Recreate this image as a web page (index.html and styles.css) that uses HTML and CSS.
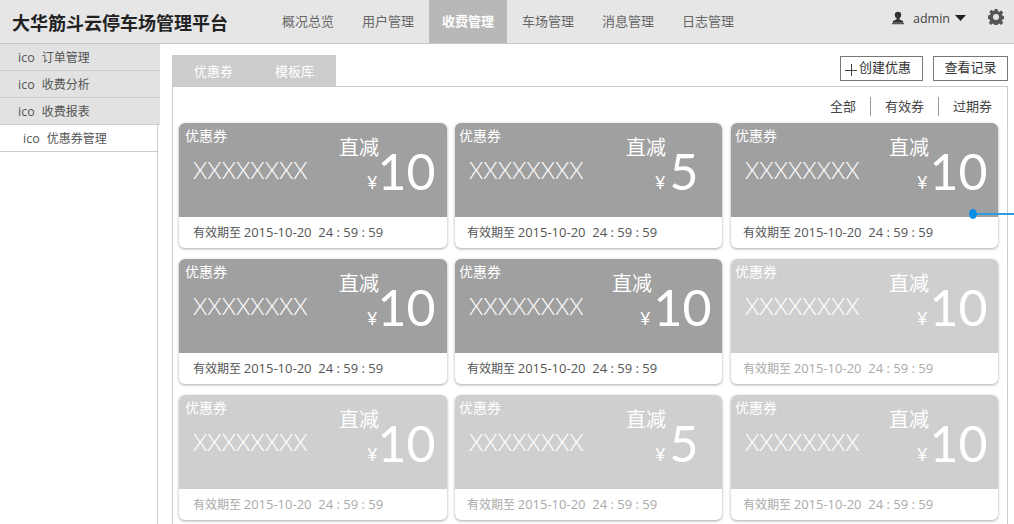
FILE: index.html
```html
<!DOCTYPE html>
<html lang="zh">
<head>
<meta charset="utf-8">
<title>大华筋斗云停车场管理平台</title>
<link rel="stylesheet" href="styles.css">
</head>
<body>
<header class="topbar">
  <h1 class="brand">大华筋斗云停车场管理平台</h1>
  <nav class="mainnav">
    <a class="mainnav-item">概况总览</a>
    <a class="mainnav-item">用户管理</a>
    <a class="mainnav-item is-active">收费管理</a>
    <a class="mainnav-item">车场管理</a>
    <a class="mainnav-item">消息管理</a>
    <a class="mainnav-item">日志管理</a>
  </nav>
  <div class="account">
    <svg class="icon-user" viewBox="0 0 14 14" width="14" height="14"><circle cx="7" cy="4" r="3.2" fill="#333"/><path d="M5.500 7h3v1.600l3.600 1.500v1.700H1.900v-1.700l3.600-1.500z" fill="#333"/><rect x="1" y="12.200" width="12" height="1" fill="#333"/></svg>
    <span class="account-name">admin</span>
    <svg class="icon-caret" viewBox="0 0 11 6" width="11" height="6"><path d="M0 0h11L5.500 6z" fill="#222"/></svg>
    <svg class="icon-gear" viewBox="0 0 16 16" width="16" height="16"><path fill="#555" fill-rule="evenodd" d="M6.500 0h3l.4 2.200 1.300.6 1.900-1.300 2.100 2.100-1.300 1.900.6 1.300 2.200.4v3l-2.200.4-.6 1.300 1.300 1.900-2.100 2.100-1.900-1.300-1.300.6-.4 2.200h-3l-.4-2.200-1.300-.6-1.900 1.300-2.100-2.100 1.300-1.900-.6-1.300L-.2 9.500v-3l2.200-.4.6-1.300-1.300-1.900 2.100-2.100 1.900 1.300 1.300-.6zM8 5a3 3 0 1 0 0 6 3 3 0 0 0 0-6z"/></svg>
  </div>
</header>
<div class="layout">
  <aside class="sidebar">
    <a class="side-item"><span class="ico">ico</span>订单管理</a>
    <a class="side-item"><span class="ico">ico</span>收费分析</a>
    <a class="side-item"><span class="ico">ico</span>收费报表</a>
    <a class="side-item is-active"><span class="ico">ico</span>优惠券管理</a>
  </aside>
  <main class="content">
    <div class="toolbar">
      <div class="tabs"><span class="tab">优惠券</span><span class="tab">模板库</span></div>
      <div class="actions">
        <button class="btn btn-create"><svg class="icon-plus" viewBox="0 0 12 12" width="12" height="12"><path d="M0 6.500h12M6.500 0v12" stroke="#444" fill="none"/></svg>创建优惠</button>
        <button class="btn btn-log">查看记录</button>
      </div>
    </div>
    <section class="panel">
      <div class="filters">
        <span class="filter">全部</span>
        <span class="filter">有效券</span>
        <span class="filter">过期券</span>
      </div>
      <div class="cards">
        <article class="card"><div class="card-head"><div class="card-left"><div class="card-label">优惠券</div><div class="card-name">XXXXXXXX</div></div><div class="card-right"><div class="card-type">直减</div><div class="card-value"><span class="yen">¥</span>10</div></div></div><div class="card-foot">有效期至 <span class="card-date">2015-10-20&nbsp; 24 : 59 : 59</span></div></article>
        <article class="card card-single"><div class="card-head"><div class="card-left"><div class="card-label">优惠券</div><div class="card-name">XXXXXXXX</div></div><div class="card-right"><div class="card-type">直减</div><div class="card-value"><span class="yen">¥</span>5</div></div></div><div class="card-foot">有效期至 <span class="card-date">2015-10-20&nbsp; 24 : 59 : 59</span></div></article>
        <article class="card"><div class="card-head"><div class="card-left"><div class="card-label">优惠券</div><div class="card-name">XXXXXXXX</div></div><div class="card-right"><div class="card-type">直减</div><div class="card-value"><span class="yen">¥</span>10</div></div></div><div class="card-foot">有效期至 <span class="card-date">2015-10-20&nbsp; 24 : 59 : 59</span></div></article>
        <article class="card"><div class="card-head"><div class="card-left"><div class="card-label">优惠券</div><div class="card-name">XXXXXXXX</div></div><div class="card-right"><div class="card-type">直减</div><div class="card-value"><span class="yen">¥</span>10</div></div></div><div class="card-foot">有效期至 <span class="card-date">2015-10-20&nbsp; 24 : 59 : 59</span></div></article>
        <article class="card card-wide"><div class="card-head"><div class="card-left"><div class="card-label">优惠券</div><div class="card-name">XXXXXXXX</div></div><div class="card-right"><div class="card-type">直减</div><div class="card-value"><span class="yen">¥</span>10</div></div></div><div class="card-foot">有效期至 <span class="card-date">2015-10-20&nbsp; 24 : 59 : 59</span></div></article>
        <article class="card is-expired"><div class="card-head"><div class="card-left"><div class="card-label">优惠券</div><div class="card-name">XXXXXXXX</div></div><div class="card-right"><div class="card-type">直减</div><div class="card-value"><span class="yen">¥</span>10</div></div></div><div class="card-foot">有效期至 <span class="card-date">2015-10-20&nbsp; 24 : 59 : 59</span></div></article>
        <article class="card is-expired"><div class="card-head"><div class="card-left"><div class="card-label">优惠券</div><div class="card-name">XXXXXXXX</div></div><div class="card-right"><div class="card-type">直减</div><div class="card-value"><span class="yen">¥</span>10</div></div></div><div class="card-foot">有效期至 <span class="card-date">2015-10-20&nbsp; 24 : 59 : 59</span></div></article>
        <article class="card card-single is-expired"><div class="card-head"><div class="card-left"><div class="card-label">优惠券</div><div class="card-name">XXXXXXXX</div></div><div class="card-right"><div class="card-type">直减</div><div class="card-value"><span class="yen">¥</span>5</div></div></div><div class="card-foot">有效期至 <span class="card-date">2015-10-20&nbsp; 24 : 59 : 59</span></div></article>
        <article class="card is-expired"><div class="card-head"><div class="card-left"><div class="card-label">优惠券</div><div class="card-name">XXXXXXXX</div></div><div class="card-right"><div class="card-type">直减</div><div class="card-value"><span class="yen">¥</span>10</div></div></div><div class="card-foot">有效期至 <span class="card-date">2015-10-20&nbsp; 24 : 59 : 59</span></div></article>
      </div>
    </section>
  </main>
</div>
<div class="marker"><span class="marker-dot"></span><span class="marker-line"></span></div>
</body>
</html>
```
FILE: styles.css
```css
* { box-sizing: border-box; }
html, body { margin: 0; height: 524px; overflow: hidden; }
body { background: #fff; color: #555; font-family: "Noto Sans CJK SC", "Liberation Sans", sans-serif; font-size: 12px; position: relative; }

.topbar { height: 44px; display: flex; align-items: stretch; background: #e6e6e6; border-bottom: 1px solid #c8c8c8; }
.brand { margin: 0 0 0 12px; width: 257px; font-size: 18px; line-height: 45px; font-weight: 700; color: #222; white-space: nowrap; }
.mainnav { display: flex; gap: 2px; }
.mainnav-item { width: 78px; text-align: center; font-size: 13px; line-height: 42px; color: #666; }
.mainnav-item.is-active { background: #b8b8b8; color: #fff; font-weight: 700; }
.account { margin-left: auto; display: flex; align-items: center; padding: 0 10px 7px 0; }
.icon-user { display: block; }
.account-name { margin-left: 8px; font-family: "Open Sans", sans-serif; font-size: 12.5px; color: #444; }
.icon-caret { margin-left: 5px; }
.icon-gear { margin: 0 0 3px 22px; }

.layout { display: flex; height: 480px; }
.sidebar { width: 158px; flex: none; border-right: 1px solid #ccc; }
.side-item { display: block; height: 27px; margin-right: -3px; padding-left: 18px; background: #e2e2e2; border-bottom: 1px solid #ccc; line-height: 26px; color: #555; }
.side-item.is-active { margin-right: 0; padding-left: 23px; background: #fff; }
.ico { font-family: "Open Sans", sans-serif; font-size: 12.5px; margin-right: 7px; }

.content { flex: 1; min-width: 0; padding: 11px 6px 0 14px; }
.toolbar { display: flex; justify-content: space-between; height: 31px; }
.tabs { display: flex; width: 164px; padding-left: 22px; gap: 42px; background: #ccc; }
.tab { color: #fff; font-size: 13px; line-height: 31px; }
.actions { display: flex; gap: 10px; }
.btn { height: 25px; margin-top: 1px; padding: 0; background: #fff; border: 1px solid #777; color: #333; font-family: inherit; font-size: 13px; line-height: 20px; }
.btn-create { width: 83px; display: flex; align-items: center; padding: 0 0 4px 4px; }
.btn-log { width: 75px; padding-bottom: 7px; }
.icon-plus { flex: none; margin: 6px 2px 0 0; }

.panel { border: 1px solid #ccc; padding: 0 8px 0 6px; height: 460px; }
.filters { display: flex; justify-content: flex-end; align-items: flex-start; height: 36px; padding: 10px 7px 0 0; }
.filter { font-size: 13px; line-height: 17px; padding-bottom: 2px; color: #444; }
.filter + .filter { margin-left: 14px; padding-left: 14px; border-left: 1px solid #999; }

.cards { display: grid; grid-template-columns: 268px 268px 267px; column-gap: 8px; row-gap: 11px; }
.card { height: 125px; border-radius: 6px; background: #fff; box-shadow: 0 1px 3px rgba(0, 0, 0, .35); overflow: hidden; }
.card:nth-child(3n+2) { margin-right: 1px; }
.card-head { height: 94px; display: flex; justify-content: space-between; background: #a0a0a0; color: #fff; padding: 2px 12px 0 6px; }
.card:not(:nth-child(3n+1)) .card-head { padding-left: 4px; }
.card-label { font-size: 14px; line-height: 20px; }
.card-name { margin: 9px 0 0 8px; font-family: "Lato", sans-serif; font-size: 23px; line-height: 32px; font-weight: 300; }
.card:not(:nth-child(3n+1)) .card-name { margin-left: 10px; }
.card-right { display: flex; flex-direction: column; align-items: flex-start; width: 96px; }
.card-type { font-size: 20px; line-height: 32px; margin-top: 6px; }
.card-value { margin: -24px 0 0 28px; font-family: "Lato", sans-serif; font-size: 50px; line-height: 64px; font-weight: 400; white-space: nowrap; }
.yen { font-size: 18px; font-weight: 400; vertical-align: 1px; }
.card:nth-child(3n) .card-type { margin-left: -1px; }
.card:nth-child(3n) .card-value { margin-left: 27px; }
.card:nth-child(3n) .yen { margin-right: 2px; }
.card-wide .card-type { margin-left: -2px; }
.card-wide .card-value { margin-left: 26px; }
.card-wide .yen { margin-right: 3px; }
.card.card-single .card-right { width: 84px; }
.card-single .card-value { margin-left: 29px; }
.card-single .yen { margin-right: 4px; }
.card-foot { padding-left: 14px; line-height: 30px; font-size: 12px; color: #555; }
.card:not(:nth-child(3n+1)) .card-foot { padding-left: 12px; }
.card-date { font-family: "Open Sans", sans-serif; font-size: 13px; }
.is-expired .card-head { background: #cfcfcf; }
.is-expired .card-foot { color: #aaa; }

.marker { position: absolute; left: 969px; top: 209px; width: 45px; height: 10px; display: flex; align-items: center; }
.marker-dot { width: 8px; height: 10px; border-radius: 50%; background: #0a8fe6; flex: none; }
.marker-line { flex: 1; height: 2px; background: #2a9bdc; }
```
